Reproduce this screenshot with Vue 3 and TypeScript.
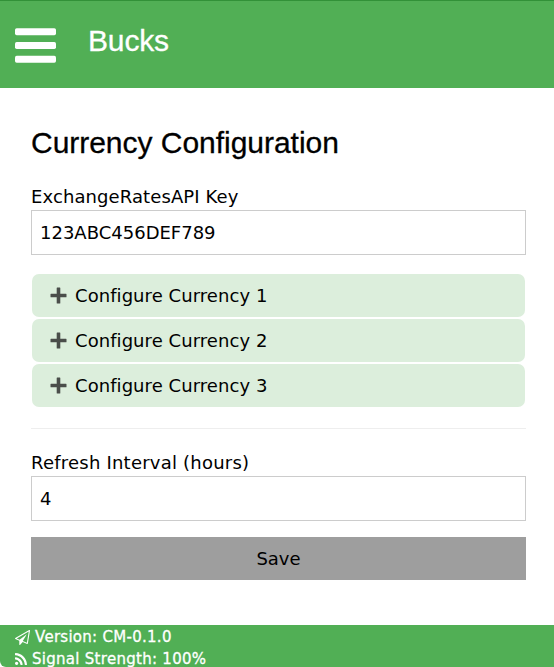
<script setup lang="ts">
import { ref } from 'vue'

const apiKey = ref('123ABC456DEF789')
const refreshHours = ref('4')
const currencies: number[] = [1, 2, 3]
</script>

<template>
  <div class="page">
    <header class="topbar">
      <svg class="menu" viewBox="0 0 41 35" aria-hidden="true">
        <rect y="0.3" width="41" height="6.9" rx="1.7" />
        <rect y="14" width="41" height="6.9" rx="1.7" />
        <rect y="27.8" width="41" height="6.9" rx="1.7" />
      </svg>
      <h1 class="brand">Bucks</h1>
    </header>

    <main class="content">
      <h2 class="title">Currency Configuration</h2>
      <label class="label key-label" for="key">ExchangeRatesAPI Key</label>
      <input id="key" v-model="apiKey" class="field" type="text" />

      <div class="currencies">
        <button v-for="n in currencies" :key="n" class="currency" type="button">
          <svg class="plus" viewBox="0 0 17 17" aria-hidden="true">
            <path d="M1 6.700H6.700V1Q6.700 0.500 7.200 0.500H9.800Q10.300 0.500 10.300 1V6.700H16Q16.500 6.700 16.500 7.200V9.800Q16.500 10.300 16 10.300H10.300V16Q10.300 16.500 9.800 16.500H7.200Q6.700 16.500 6.700 16V10.300H1Q0.500 10.300 0.500 9.800V7.200Q0.500 6.700 1 6.700Z" />
          </svg>
          <span>Configure Currency {{ n }}</span>
        </button>
      </div>

      <hr class="rule" />
      <label class="label hours-label" for="hours">Refresh Interval (hours)</label>
      <input id="hours" v-model="refreshHours" class="field" type="text" />
      <button class="save" type="button">Save</button>
    </main>

    <footer class="status">
      <div class="status-row">
        <svg class="plane" viewBox="0 0 1792 1792" aria-hidden="true">
          <path d="M1764 11q33 24 27 64l-256 1536q-5 29-32 45-14 8-31 8-11 0-24-5l-527-215-298 327q-18 21-47 21-14 0-23-4-19-7-30-23.500t-11-36.500v-452l-472-193q-37-14-40-55-3-39 32-59L1696 9q35-21 68 2zm-342 1499l221-1323-1434 827 336 137 863-639-478 797z" />
        </svg>
        <span>Version: CM-0.1.0</span>
      </div>
      <div class="status-row">
        <svg class="rss" viewBox="0 0 1408 1408" aria-hidden="true">
          <path d="M384 1216q0 80-56 136t-136 56-136-56-56-136 56-136 136-56 136 56 56 136zm512 123q2 28-17 48-18 21-47 21H697q-25 0-43-16.500t-20-41.500q-22-229-184.500-391.500T58 774q-25-2-41.500-20T0 711V576q0-29 21-47 17-17 43-17h5q160 13 306 80.500T634 774q114 113 181.500 259t80.500 306zm512 2q2 27-18 47-18 20-46 20h-143q-26 0-44.500-17.500T1137 1348q-12-215-101-408.500t-231.500-336-336-231.500T60 270q-25-1-42.500-19.500T0 207V64q0-28 20-46Q38 0 64 0h3q262 13 501.500 120T994 414q187 186 294 425.500t120 501.500z" />
        </svg>
        <span>Signal Strength: 100%</span>
      </div>
    </footer>
  </div>
</template>

<style>
body {
  background: #fff;
}
</style>

<style scoped>
* {
  box-sizing: border-box;
}
.page {
  height: 667px;
  display: flex;
  flex-direction: column;
  overflow: hidden;
  color: #000;
  font: 18px/27px "DejaVu Sans", Verdana, sans-serif;
}
.topbar {
  height: 88px;
  flex: none;
  display: flex;
  align-items: flex-start;
  background: #51af55;
  border-top: 1px solid #329138;
  padding-left: 15px;
}
.menu {
  width: 41px;
  height: 35px;
  margin-top: 27px;
  fill: #fff;
}
.brand,
.title {
  margin: 0;
  font: 400 30px/45px "Liberation Sans", Arial, sans-serif;
  letter-spacing: -0.03px;
  -webkit-text-stroke: 0.3px currentColor;
}
.brand {
  margin: 17px 0 0 32px;
  color: #fff;
  letter-spacing: -0.15px;
}
.content {
  flex: 1;
  display: flex;
  flex-direction: column;
  padding: 32px 28px 0 31px;
}
.title {
  height: 45px;
}
.label {
  height: 27px;
}
.key-label {
  margin-top: 18px;
  letter-spacing: 0.1px;
}
.field {
  flex: none;
  width: 100%;
  height: 45px;
  margin: 0;
  padding: 8px;
  border: 1px solid #ccc;
  border-radius: 0;
  background: #fff;
  color: #000;
  font: inherit;
  outline: none;
}
.currencies {
  display: flex;
  flex-direction: column;
  gap: 2px;
  margin: 19px 1px 0;
}
.currency {
  height: 43px;
  display: flex;
  align-items: center;
  padding: 0 18px;
  border: 0;
  border-radius: 7px;
  background: #dceedc;
  color: #000;
  font: inherit;
  letter-spacing: 0.06px;
}
.plus {
  width: 17px;
  height: 17px;
  margin-right: 8px;
  fill: #4a4d4a;
}
.rule {
  width: 100%;
  height: 1px;
  margin: 21px 0 0;
  border: 0;
  background: #eee;
}
.hours-label {
  margin-top: 20px;
  letter-spacing: 0.22px;
}
.save {
  height: 43px;
  margin-top: 16px;
  border: 0;
  background: #9e9e9e;
  color: #000;
  font: inherit;
}
.status {
  height: 42px;
  flex: none;
  padding: 1px 0 0 15px;
  background: #51af55;
  border-bottom-left-radius: 6px;
  color: #fff;
  font-size: 15px;
  line-height: 22px;
  letter-spacing: 0.28px;
  -webkit-text-stroke: 0.3px #fff;
}
.status-row {
  height: 22px;
  display: flex;
  align-items: center;
}
.plane {
  width: 15px;
  height: 15px;
  margin-right: 5px;
  fill: #fff;
}
.rss {
  width: 12px;
  height: 12px;
  margin-right: 5px;
  fill: #fff;
}
</style>
